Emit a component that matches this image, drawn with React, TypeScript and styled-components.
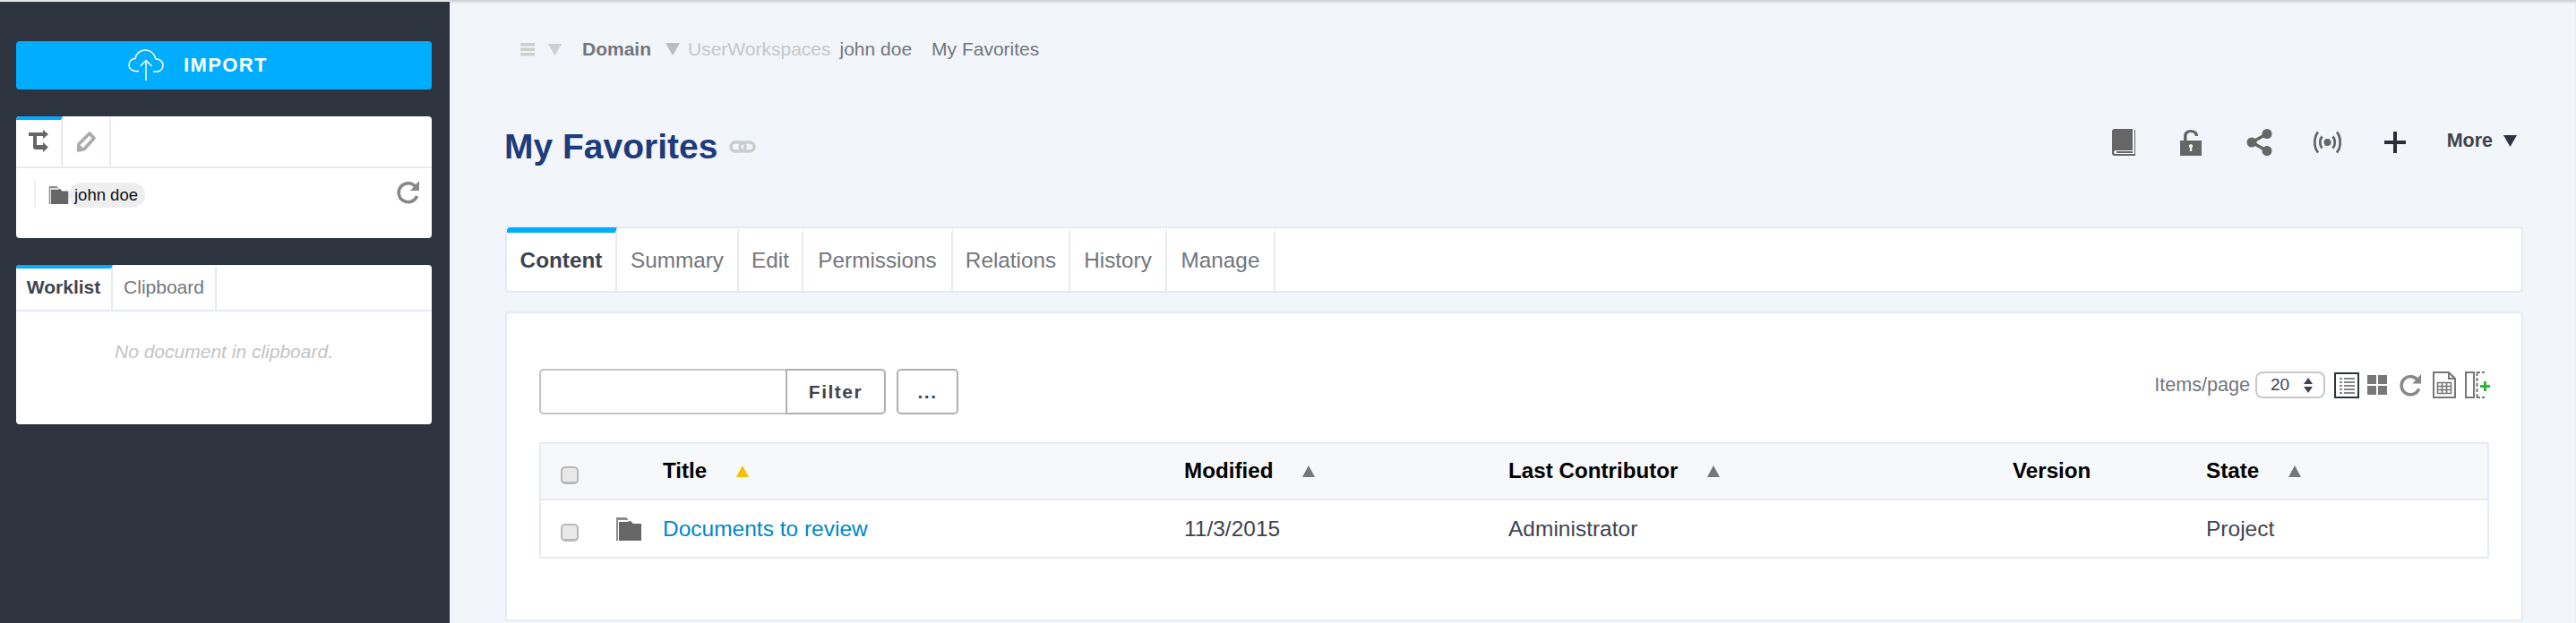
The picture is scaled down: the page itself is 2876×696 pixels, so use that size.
import styled, { createGlobalStyle } from "styled-components";

const GlobalStyle = createGlobalStyle`
  html, body {
    margin: 0;
    padding: 0;
    background: #f2f5f9;
    overflow: hidden;
  }
  * {
    box-sizing: border-box;
  }
`;

const Page = styled.div`
  display: flex;
  width: 2876px;
  height: 696px;
  overflow: hidden;
  font-family: "Liberation Sans", Arial, sans-serif;
  color: #3f444f;
`;

const Sidebar = styled.aside`
  width: 502px;
  flex: none;
  background: #2d3440;
  border-top: 2px solid #e4e6ea;
  padding: 44px 20px 0 18px;
  display: flex;
  flex-direction: column;
`;

const ImportButton = styled.button`
  height: 54px;
  border: none;
  border-radius: 4px;
  background: #00adff;
  color: #fff;
  font: bold 22px "Liberation Sans", Arial, sans-serif;
  letter-spacing: 1.4px;
  display: flex;
  align-items: center;
  justify-content: flex-start;
  padding: 0 0 0 125px;
  gap: 22px;
  margin-bottom: 30px;
`;

const SideCard = styled.section<{ $height: number }>`
  height: ${(p) => p.$height}px;
  background: #fff;
  border-radius: 4px;
  margin-bottom: 30px;
  overflow: hidden;
`;

const SideTabs = styled.div<{ $height: number }>`
  display: flex;
  height: ${(p) => p.$height}px;
  border-bottom: 2px solid #e6eaf1;
`;

const SideTab = styled.div<{ $active?: boolean; $width: number }>`
  width: ${(p) => p.$width}px;
  display: flex;
  align-items: center;
  justify-content: center;
  border-right: 2px solid #e6eaf1;
  border-top: 4px solid ${(p) => (p.$active ? "#00adff" : "transparent")};
  font-size: 21px;
  font-weight: ${(p) => (p.$active ? "bold" : "normal")};
  color: ${(p) => (p.$active ? "#3f444f" : "#73767d")};
  padding-bottom: 4px;
`;

const TreeBody = styled.div`
  display: flex;
  align-items: flex-start;
  padding: 15px 13px 0 20px;
`;

const TreeRule = styled.div`
  width: 2px;
  height: 30px;
  background: #eeeff2;
  margin: -1px 14px 0 0;
`;

const TreeNode = styled.div`
  display: flex;
  align-items: center;
  flex: 1;
  height: 30px;
`;

const NodeLabel = styled.span`
  height: 28px;
  line-height: 27px;
  border-radius: 14px;
  background: #eeeeee;
  padding: 0 8px 0 6px;
  font-size: 18.5px;
  color: #111;
`;

const TreeReload = styled.span`
  display: flex;
  margin-top: -1px;
`;

const EmptyNote = styled.p`
  margin: 33px 0 0;
  text-align: center;
  font-size: 21px;
  font-style: italic;
  color: #c4c4c4;
`;

const Main = styled.main`
  flex: 1;
  min-width: 0;
  padding: 2px 59px 0 62px;
  box-shadow: inset 0 3px 3px -1px #c9cacc;
`;

const Breadcrumb = styled.nav`
  display: flex;
  align-items: center;
  height: 24px;
  margin: 41px 0 0 17px;
  font-size: 21px;
  color: #73767d;
`;

const CrumbMenu = styled.span`
  display: flex;
  align-items: center;
  gap: 15px;
  margin-right: 23px;
`;

const CrumbDomain = styled.span`
  font-weight: bold;
  margin-right: 16px;
`;

const CrumbArrow = styled.span`
  margin-right: 9px;
  display: flex;
`;

const CrumbParent = styled.span`
  color: #c6c8cb;
  margin-right: 10px;
`;

const CrumbItem = styled.span`
  margin-right: 22px;
`;

const TitleRow = styled.div`
  display: flex;
  align-items: center;
  justify-content: space-between;
  margin: 62px 0 0 -1px;
  height: 70px;
`;

const PageTitle = styled.div`
  display: flex;
  align-items: center;
  gap: 13px;
`;

const Heading = styled.h1`
  margin: 0;
  font-size: 39px;
  line-height: 46px;
  font-weight: bold;
  color: #1f3b7b;
`;

const Actions = styled.div`
  display: flex;
  align-items: center;
  padding-right: 7px;
  margin-top: -10px;
`;

const ActionIcon = styled.span<{ $width: number; $gap: number }>`
  width: ${(p) => p.$width}px;
  margin-right: ${(p) => p.$gap}px;
  display: flex;
`;

const MoreButton = styled.span`
  display: flex;
  align-items: center;
  gap: 12px;
  font-size: 21.5px;
  font-weight: bold;
  color: #3f444f;
  margin-top: -4px;
`;

const TabBar = styled.div`
  display: flex;
  height: 74px;
  margin-top: 54px;
  background: #fff;
  border: 2px solid #e6eaf1;
  border-radius: 4px;
`;

const ContentTab = styled.div<{ $active?: boolean; $width: number }>`
  width: ${(p) => p.$width}px;
  display: flex;
  align-items: center;
  justify-content: center;
  font-size: 24.3px;
  font-weight: ${(p) => (p.$active ? "bold" : "normal")};
  color: ${(p) => (p.$active ? "#3f444f" : "#73767d")};
  border-right: 2px solid #e6eaf1;
  border-top: 6px solid ${(p) => (p.$active ? "#00adff" : "transparent")};
  border-top-left-radius: ${(p) => (p.$active ? "4px" : "0")};
  padding-bottom: 4px;
  margin-top: -1px;
`;

const ContentCard = styled.section`
  margin-top: 21px;
  height: 346px;
  background: #fff;
  border: 2px solid #e6eaf1;
  border-radius: 4px;
  padding: 62px 36px 0 36px;
`;

const Toolbar = styled.div`
  display: flex;
  justify-content: space-between;
  align-items: flex-start;
  height: 82px;
`;

const FilterGroup = styled.div`
  display: flex;
  height: 51px;
`;

const FilterInput = styled.input`
  width: 275px;
  height: 51px;
  border: 2px solid #c4c4c4;
  border-right: none;
  border-radius: 5px 0 0 5px;
  background: #fff;
  outline: none;
`;

const OutlineButton = styled.button<{ $width: number }>`
  width: ${(p) => p.$width}px;
  height: 51px;
  background: #fff;
  border: 2px solid #b0b0b0;
  border-radius: ${(p) => (p.$width > 100 ? "0 5px 5px 0" : "5px")};
  margin-left: ${(p) => (p.$width > 100 ? "0" : "12px")};
  font: bold 21px "Liberation Sans", Arial, sans-serif;
  letter-spacing: 1.5px;
  color: #3f444f;
`;

const ListTools = styled.div`
  display: flex;
  align-items: center;
  height: 30px;
  margin-top: 3px;
  margin-right: -1px;
  font-size: 21.6px;
  color: #73767d;
`;

const PerPageSelect = styled.div`
  width: 78px;
  height: 30px;
  margin: 0 10px 0 6px;
  padding: 0 12px 0 15px;
  display: flex;
  align-items: center;
  justify-content: space-between;
  border: 2px solid #c8c8c8;
  border-radius: 8px;
  font-size: 19px;
  color: #3f444f;
`;

const ToolIcon = styled.span<{ $gap: number }>`
  display: flex;
  margin-right: ${(p) => p.$gap}px;
`;

const Table = styled.div`
  border: 2px solid #e6eaf1;
  border-radius: 1px;
`;

const TableRow = styled.div<{ $head?: boolean }>`
  display: grid;
  grid-template-columns: 84px 52px 582px 362px 563px 216px 1fr;
  align-items: center;
  height: 63px;
  background: ${(p) => (p.$head ? "#f7f8fa" : "#fff")};
  border-bottom: ${(p) => (p.$head ? "2px solid #e6eaf1" : "none")};
  font-size: ${(p) => (p.$head ? 24.2 : 24.5)}px;
  font-weight: ${(p) => (p.$head ? "bold" : "normal")};
  color: ${(p) => (p.$head ? "#000" : "#3f444f")};
`;

const HeadCell = styled.div`
  display: flex;
  align-items: center;
  gap: 33px;
  margin-top: -1px;
`;

const CheckCell = styled.div`
  padding: 8px 0 0 22px;
  display: flex;
`;

const RowCheck = styled.input`
  appearance: none;
  width: 20px;
  height: 20px;
  margin: 0;
  background: #e9e9e9;
  border: 2px solid #b8b8b8;
  border-bottom-width: 3px;
  border-radius: 5px;
`;

const DocLink = styled.a`
  color: #0087c7;
  text-decoration: none;
`;

const SortArrow = ({ color = "#777" }: { color?: string }) => (
  <svg width="14" height="13" viewBox="0 0 14 13">
    <path d="M7 0l7 13H0z" fill={color} />
  </svg>
);

const DownArrow = ({ size, color }: { size: number; color: string }) => (
  <svg width={size} height={size} viewBox="0 0 16 16">
    <path d="M0 1h16L8 15z" fill={color} />
  </svg>
);

const FolderIcon = ({ width, height }: { width: number; height: number }) => (
  <svg width={width} height={height} viewBox="0 0 28 26">
    <path d="M0 0h11l3 3H2v23H0z" fill="#8c8c8c" />
    <path d="M3 5h10l2-1h1l3 3h9v19H3z" fill="#666" />
  </svg>
);

const CloudIcon = () => (
  <svg width="40" height="36" viewBox="0 0 40 36" fill="none" stroke="#fff" strokeWidth="1.5">
    <path d="M12 24.5H8.5C4.5 24.5 1 21.5 1 17.5s3-7 7-7c.5-5 5-9.5 11-9.5 6.5 0 10.5 4.5 12 10 4-.5 8 2.5 8 7 0 4-3 7-7 7h-4" />
    <path d="M20 35V12.5M13.5 19l6.5-6.5 6.5 6.5" />
  </svg>
);

const LoopIcon = () => (
  <svg width="22" height="26" viewBox="0 0 22 26" fill="#666">
    <path d="M0 3h16V0l6 5-6 5V7H9v10h7v-3l6 5.5-6 5.5v-3H8c-2 0-3-1-3-3V7H0z" />
  </svg>
);

const TagIcon = () => (
  <svg width="23" height="25" viewBox="0 0 23 25">
    <path d="M15 3l5 5.5L9 20.5l-6.5 1.5.5-7z" fill="#fff" stroke="#aaa" strokeWidth="3.6" strokeLinejoin="round" />
    <path d="M3 15l6 5.5-6 1.5z" fill="#aaa" />
  </svg>
);

const ReloadIcon = ({ size, color }: { size: number; color: string }) => (
  <svg width={size} height={size} viewBox="0 0 26 26" fill="none">
    <path d="M21.5 7.5A10.5 10.5 0 1 0 22.5 17" stroke={color} strokeWidth="3.6" />
    <path d="M25 0v11H15z" fill={color} />
  </svg>
);

const HamburgerIcon = () => (
  <svg width="16" height="15" viewBox="0 0 16 15" fill="#cfcfcf">
    <rect width="16" height="3.5" />
    <rect y="5.5" width="16" height="3.5" />
    <rect y="11" width="16" height="3.5" />
  </svg>
);

const LinkIcon = () => (
  <svg width="30" height="14" viewBox="0 0 30 14" fill="none" stroke="#cccccc" strokeWidth="3.5">
    <rect x="2" y="2" width="16" height="10" rx="5" />
    <rect x="12" y="2" width="16" height="10" rx="5" />
  </svg>
);

const BookIcon = () => (
  <svg width="26" height="30" viewBox="0 0 26 30">
    <path d="M3 0h20v24H4c-1.5 0-2 1-2 2s.5 2 2 2h21V1h1v29H3c-2 0-3-1-3-3V3c0-2 1-3 3-3z" fill="#666" />
    <rect x="5" y="25" width="18" height="2" fill="#666" />
  </svg>
);

const LockIcon = () => (
  <svg width="24" height="30" viewBox="0 0 24 30">
    <path d="M4 13V8c0-4 3-7 8-7 4.5 0 8 3 8 6v1h-3.5V7c0-1.5-2-3-4.5-3S7.5 5.5 7.5 8v5z" fill="#666" />
    <path d="M0 13h24v17H0z" fill="#666" />
    <path d="M12 17a2.2 2.2 0 0 1 1.2 4v4h-2.4v-4A2.2 2.2 0 0 1 12 17z" fill="#f2f5f9" />
  </svg>
);

const ShareIcon = () => (
  <svg width="29" height="30" viewBox="0 0 29 30" fill="#666">
    <circle cx="6" cy="15" r="5.5" />
    <circle cx="23" cy="5.5" r="5.5" />
    <circle cx="23" cy="24.5" r="5.5" />
    <path d="M6 15L23 5.5M6 15l17 9.5" stroke="#666" strokeWidth="3.5" />
  </svg>
);

const BroadcastIcon = () => (
  <svg width="31" height="26" viewBox="0 0 31 26" fill="none" stroke="#666" strokeWidth="2.8">
    <circle cx="15.5" cy="13" r="4" fill="#666" stroke="none" />
    <path d="M9.5 6.5c-3 3.5-3 9.5 0 13M21.5 6.5c3 3.5 3 9.5 0 13" />
    <path d="M5 1.5c-5 6-5 17 0 23M26 1.5c5 6 5 17 0 23" />
  </svg>
);

const PlusIcon = () => (
  <svg width="24" height="24" viewBox="0 0 24 24" fill="#2b2e38">
    <rect x="10" width="4" height="24" />
    <rect y="10" width="24" height="4" />
  </svg>
);

const UpDownIcon = () => (
  <svg width="10" height="17" viewBox="0 0 10 17" fill="#3f444f">
    <path d="M5 0l5 7H0zM5 17l5-7H0z" />
  </svg>
);

const ListViewIcon = () => (
  <svg width="28" height="29" viewBox="0 0 28 29">
    <rect x="1" y="1" width="26" height="27" fill="none" stroke="#2b3440" strokeWidth="2" />
    <g fill="#888">
      <rect x="6" y="6" width="3" height="2" />
      <rect x="11" y="6" width="12" height="2" />
      <rect x="6" y="10" width="3" height="2" />
      <rect x="11" y="10" width="12" height="2" />
      <rect x="6" y="14" width="3" height="2" />
      <rect x="11" y="14" width="12" height="2" />
      <rect x="6" y="18" width="3" height="2" />
      <rect x="11" y="18" width="12" height="2" />
      <rect x="6" y="22" width="3" height="2" />
      <rect x="11" y="22" width="12" height="2" />
    </g>
  </svg>
);

const GridViewIcon = () => (
  <svg width="22" height="22" viewBox="0 0 22 22" fill="#777">
    <rect width="10" height="10" />
    <rect x="12" width="10" height="10" />
    <rect y="12" width="10" height="10" />
    <rect x="12" y="12" width="10" height="10" />
  </svg>
);

const SheetIcon = () => (
  <svg width="26" height="30" viewBox="0 0 26 30" fill="none" stroke="#777">
    <path d="M1 1h17l7 7v21H1z" strokeWidth="2" />
    <path d="M18 1v7h7" strokeWidth="2" />
    <path d="M5.5 12.5h15v12h-15zM5.5 16.5h15M5.5 20.5h15M10.5 12.5v12M15.5 12.5v12" strokeWidth="1.6" />
  </svg>
);

const ColumnAddIcon = () => (
  <svg width="28" height="30" viewBox="0 0 28 30" fill="none">
    <rect x="1" y="1" width="9" height="28" stroke="#777" strokeWidth="2" />
    <path d="M13 1h9M13 29h9M13.5 1v28" stroke="#777" strokeWidth="2" strokeDasharray="4 2" />
    <path d="M21 11h3v4h4v3h-4v4h-3v-4h-4v-3h4z" fill="#2fb43c" />
  </svg>
);

const contentTabs = [
  { label: "Content", width: 123, active: true },
  { label: "Summary", width: 136 },
  { label: "Edit", width: 72 },
  { label: "Permissions", width: 167 },
  { label: "Relations", width: 131 },
  { label: "History", width: 108 },
  { label: "Manage", width: 121 },
];

const columns = [
  { label: "Title", arrow: "#f5c000" },
  { label: "Modified", arrow: "#777" },
  { label: "Last Contributor", arrow: "#777" },
  { label: "Version" },
  { label: "State", arrow: "#777" },
];

export default function App() {
  return (
    <Page>
      <GlobalStyle />
      <Sidebar>
        <ImportButton>
          <CloudIcon />
          IMPORT
        </ImportButton>
        <SideCard $height={136}>
          <SideTabs $height={58}>
            <SideTab $active $width={52}>
              <LoopIcon />
            </SideTab>
            <SideTab $width={54}>
              <TagIcon />
            </SideTab>
          </SideTabs>
          <TreeBody>
            <TreeRule />
            <TreeNode>
              <FolderIcon width={23} height={20} />
              <NodeLabel>john doe</NodeLabel>
            </TreeNode>
            <TreeReload>
              <ReloadIcon size={26} color="#888" />
            </TreeReload>
          </TreeBody>
        </SideCard>
        <SideCard $height={178}>
          <SideTabs $height={52}>
            <SideTab $active $width={108}>
              Worklist
            </SideTab>
            <SideTab $width={116}>Clipboard</SideTab>
          </SideTabs>
          <EmptyNote>No document in clipboard.</EmptyNote>
        </SideCard>
      </Sidebar>
      <Main>
        <Breadcrumb>
          <CrumbMenu>
            <HamburgerIcon />
            <DownArrow size={15} color="#cfcfcf" />
          </CrumbMenu>
          <CrumbDomain>Domain</CrumbDomain>
          <CrumbArrow>
            <DownArrow size={16} color="#bdbdbd" />
          </CrumbArrow>
          <CrumbParent>UserWorkspaces</CrumbParent>
          <CrumbItem>john doe</CrumbItem>
          <CrumbItem>My Favorites</CrumbItem>
        </Breadcrumb>
        <TitleRow>
          <PageTitle>
            <Heading>My Favorites</Heading>
            <LinkIcon />
          </PageTitle>
          <Actions>
            <ActionIcon $width={26} $gap={50}>
              <BookIcon />
            </ActionIcon>
            <ActionIcon $width={24} $gap={50}>
              <LockIcon />
            </ActionIcon>
            <ActionIcon $width={29} $gap={46}>
              <ShareIcon />
            </ActionIcon>
            <ActionIcon $width={31} $gap={48}>
              <BroadcastIcon />
            </ActionIcon>
            <ActionIcon $width={24} $gap={46}>
              <PlusIcon />
            </ActionIcon>
            <MoreButton>
              More
              <DownArrow size={15} color="#2f3340" />
            </MoreButton>
          </Actions>
        </TitleRow>
        <TabBar>
          {contentTabs.map((tab) => (
            <ContentTab key={tab.label} $active={tab.active} $width={tab.width}>
              {tab.label}
            </ContentTab>
          ))}
        </TabBar>
        <ContentCard>
          <Toolbar>
            <FilterGroup>
              <FilterInput />
              <OutlineButton $width={112}>Filter</OutlineButton>
              <OutlineButton $width={69}>...</OutlineButton>
            </FilterGroup>
            <ListTools>
              Items/page
              <PerPageSelect>
                20
                <UpDownIcon />
              </PerPageSelect>
              <ToolIcon $gap={9}>
                <ListViewIcon />
              </ToolIcon>
              <ToolIcon $gap={14}>
                <GridViewIcon />
              </ToolIcon>
              <ToolIcon $gap={12}>
                <ReloadIcon size={25} color="#888" />
              </ToolIcon>
              <ToolIcon $gap={10}>
                <SheetIcon />
              </ToolIcon>
              <ToolIcon $gap={0}>
                <ColumnAddIcon />
              </ToolIcon>
            </ListTools>
          </Toolbar>
          <Table>
            <TableRow $head>
              <CheckCell>
                <RowCheck type="checkbox" />
              </CheckCell>
              <div />
              {columns.map((col) => (
                <HeadCell key={col.label}>
                  {col.label}
                  {col.arrow && <SortArrow color={col.arrow} />}
                </HeadCell>
              ))}
            </TableRow>
            <TableRow>
              <CheckCell>
                <RowCheck type="checkbox" />
              </CheckCell>
              <FolderIcon width={28} height={28} />
              <DocLink href="#">Documents to review</DocLink>
              <div>11/3/2015</div>
              <div>Administrator</div>
              <div />
              <div>Project</div>
            </TableRow>
          </Table>
        </ContentCard>
      </Main>
    </Page>
  );
}
